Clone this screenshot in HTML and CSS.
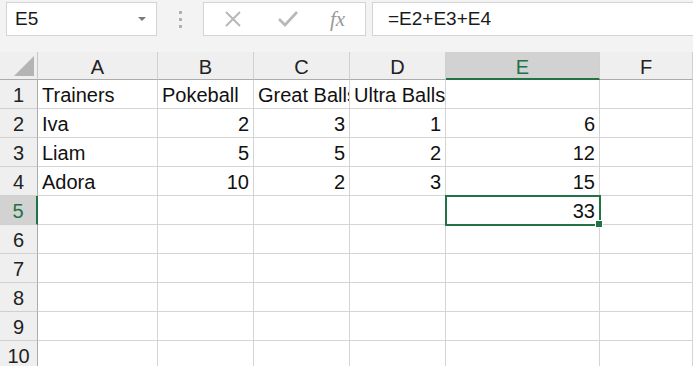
FILE: index.html
```html
<!DOCTYPE html>
<html lang="en">
<head>
    <meta charset="UTF-8">
    <title>Pokeball Sheet</title>
    <link rel="stylesheet" href="styles.css">
</head>
<body>
    <div class="topbar">
        <div class="namebox">
            <span>E5</span>
            <span class="arrow"></span>
        </div>
        <div class="dots"><i></i><i></i><i></i></div>
        <div class="buttons">
            <svg class="btn-icon" width="20" height="20" viewBox="0 0 20 20">
                <path d="M3 3 L17 17 M17 3 L3 17" stroke="#b8b8b8" stroke-width="2" fill="none"/>
            </svg>
            <svg class="btn-icon" width="22" height="20" viewBox="0 0 22 20">
                <path d="M2 10 L8 16 L20 3" stroke="#b8b8b8" stroke-width="2.6" fill="none"/>
            </svg>
            <span class="fx">fx</span>
        </div>
        <div class="formula">=E2+E3+E4</div>
    </div>

    <div class="sheet">
        <div class="corner"><span class="tri"></span></div>
        <div class="colhead">A</div>
        <div class="colhead">B</div>
        <div class="colhead">C</div>
        <div class="colhead">D</div>
        <div class="colhead active">E</div>
        <div class="colhead">F</div>

        <div class="rowhead">1</div>
        <div class="cell">Trainers</div>
        <div class="cell">Pokeball</div>
        <div class="cell">Great Balls</div>
        <div class="cell">Ultra Balls</div>
        <div class="cell"></div>
        <div class="cell"></div>

        <div class="rowhead">2</div>
        <div class="cell">Iva</div>
        <div class="cell num">2</div>
        <div class="cell num">3</div>
        <div class="cell num">1</div>
        <div class="cell num">6</div>
        <div class="cell"></div>

        <div class="rowhead">3</div>
        <div class="cell">Liam</div>
        <div class="cell num">5</div>
        <div class="cell num">5</div>
        <div class="cell num">2</div>
        <div class="cell num">12</div>
        <div class="cell"></div>

        <div class="rowhead">4</div>
        <div class="cell">Adora</div>
        <div class="cell num">10</div>
        <div class="cell num">2</div>
        <div class="cell num">3</div>
        <div class="cell num">15</div>
        <div class="cell"></div>

        <div class="rowhead active">5</div>
        <div class="cell"></div>
        <div class="cell"></div>
        <div class="cell"></div>
        <div class="cell"></div>
        <div class="cell num selected">33<span class="handle"></span></div>
        <div class="cell"></div>

        <div class="rowhead">6</div>
        <div class="cell"></div><div class="cell"></div><div class="cell"></div>
        <div class="cell"></div><div class="cell"></div><div class="cell"></div>

        <div class="rowhead">7</div>
        <div class="cell"></div><div class="cell"></div><div class="cell"></div>
        <div class="cell"></div><div class="cell"></div><div class="cell"></div>

        <div class="rowhead">8</div>
        <div class="cell"></div><div class="cell"></div><div class="cell"></div>
        <div class="cell"></div><div class="cell"></div><div class="cell"></div>

        <div class="rowhead">9</div>
        <div class="cell"></div><div class="cell"></div><div class="cell"></div>
        <div class="cell"></div><div class="cell"></div><div class="cell"></div>

        <div class="rowhead">10</div>
        <div class="cell"></div><div class="cell"></div><div class="cell"></div>
        <div class="cell"></div><div class="cell"></div><div class="cell"></div>
    </div>
</body>
</html>
```

FILE: styles.css
```css
body {
    margin: 0;
    padding: 0;
    font-family: "Liberation Sans", Arial, sans-serif;
    background-color: #fff;
    color: #1a1a1a;
    overflow: hidden;
}

/* formula bar */

.topbar {
    display: flex;
    align-items: flex-start;
    height: 52px;
    padding-top: 2px;
    box-sizing: border-box;
    background-color: #f3f3f3;
}

.namebox,
.buttons,
.formula {
    height: 34px;
    box-sizing: border-box;
    background-color: #fff;
    border: 1px solid #d4d4d4;
}

.namebox {
    width: 151px;
    margin-left: 6px;
    display: flex;
    align-items: center;
    justify-content: space-between;
    padding: 0 10px 0 8px;
    font-size: 19px;
}

.arrow {
    width: 0;
    height: 0;
    border-left: 4px solid transparent;
    border-right: 4px solid transparent;
    border-top: 4px solid #7a7a7a;
}

.dots {
    width: 46px;
    height: 34px;
    display: flex;
    flex-direction: column;
    align-items: center;
    justify-content: center;
    gap: 4px;
}

.dots i {
    width: 3px;
    height: 3px;
    background-color: #b0b0b0;
}

.buttons {
    width: 163px;
    display: flex;
    align-items: center;
    padding-left: 19px;
}

.btn-icon {
    margin-right: 34px;
}

.buttons .fx {
    font-family: "Liberation Serif", serif;
    font-style: italic;
    font-size: 21px;
    color: #9a9a9a;
    margin-left: -3px;
}

.formula {
    flex: 1;
    margin-left: 6px;
    border-right: none;
    padding-left: 15px;
    line-height: 32px;
    font-size: 19px;
}

/* grid */

.sheet {
    display: grid;
    grid-template-columns: 38px 120px 96px 96px 96px 154px 1fr;
    grid-template-rows: 28px repeat(10, 29px);
}

.corner,
.colhead,
.rowhead {
    background-color: #efefef;
    color: #222;
    font-size: 20px;
    box-sizing: border-box;
    display: flex;
    align-items: center;
    justify-content: center;
}

.corner {
    position: relative;
    border-right: 1px solid #c8c8c8;
    border-bottom: 1px solid #ababab;
}

.tri {
    position: absolute;
    right: 3px;
    bottom: 3px;
    width: 0;
    height: 0;
    border-left: 20px solid transparent;
    border-bottom: 20px solid #b4b4b4;
}

.colhead {
    border-right: 1px solid #d0d0d0;
    border-bottom: 1px solid #ababab;
    padding-top: 4px;
}

.colhead.active {
    background-color: #d2d2d2;
    color: #217346;
    border-bottom: 2px solid #217346;
}

.rowhead {
    border-right: 1px solid #ababab;
    border-bottom: 1px solid #d0d0d0;
    padding-top: 2px;
}

.rowhead.active {
    background-color: #d2d2d2;
    color: #217346;
    border-right: 2px solid #217346;
}

.cell {
    box-sizing: border-box;
    border-right: 1px solid #d4d4d4;
    border-bottom: 1px solid #d4d4d4;
    font-size: 20px;
    line-height: 31px;
    padding: 0 4px;
    white-space: nowrap;
    overflow: hidden;
    color: #111;
}

.cell.num {
    text-align: right;
}

.cell.selected {
    position: relative;
    overflow: visible;
    outline: 2px solid #217346;
    outline-offset: -1px;
}

.handle {
    position: absolute;
    right: -4px;
    bottom: -4px;
    width: 6px;
    height: 6px;
    background-color: #217346;
    border: 1px solid #fff;
}
```
